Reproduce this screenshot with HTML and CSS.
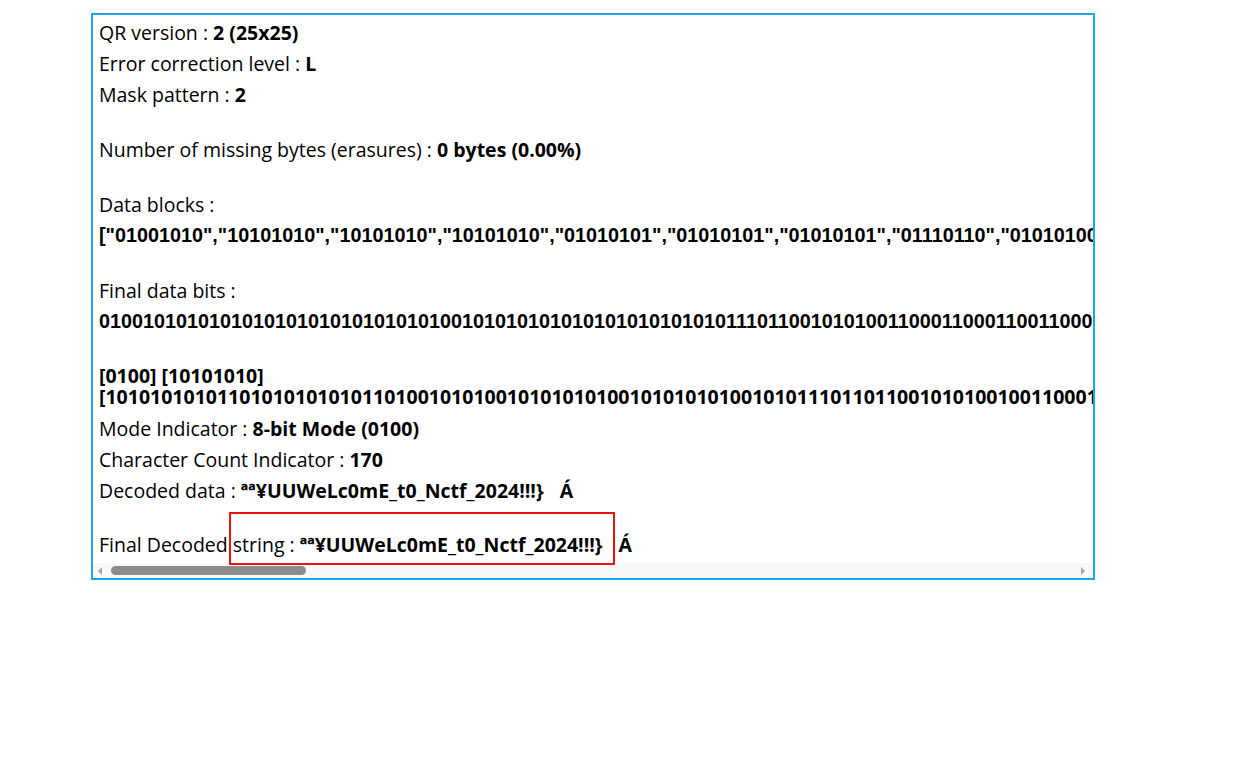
FILE: index.html
```html
<!DOCTYPE html>
<html>
<head>
<meta charset="utf-8">
<link rel="stylesheet" href="styles.css">
</head>
<body>
<div class="frame">
  <div class="scroller">
    <div class="content">
      <div class="row">QR version : <b>2 (25x25)</b></div>
      <div class="row">Error correction level : <b>L</b></div>
      <div class="row">Mask pattern : <b>2</b></div>
      <div class="gap"></div>
      <div class="row">Number of missing bytes (erasures) : <b>0 bytes (0.00%)</b></div>
      <div class="gap"></div>
      <div class="row">Data blocks :</div>
      <div class="row bits">["01001010","10101010","10101010","10101010","01010101","01010101","01010101","01110110","01010100","11000110","00110011","00011001","10011010","10100110","00110111","01100101","01110011","01011111","01110100","00110000","01011111","01001110","01100011","01110100","01100110","01011111","00110010","00110000","00110010","00110100","00100001","00100001","00100001","01111101"]</div>
      <div class="gap"></div>
      <div class="row">Final data bits :</div>
      <div class="row bits">0100101010101010101010101010101001010101010101010101010101110110010101001100011000110011000110011010101001100011011101100101011100110101111101110100001100000101111101001110011000110111010001100110010111110011001000110000001100100011010000100001001000010010000101111101</div>
      <div class="gap"></div>
      <div class="wrapblock"><b>[0100] [10101010] [10101010101101010101010110100101010010101010100101010101001010111011011001010100100110001101011010101001010101011101101100101010010011000110101010100101010111011011001010100100]</b></div>
      <div class="row">Mode Indicator : <b>8-bit Mode (0100)</b></div>
      <div class="row">Character Count Indicator : <b>170</b></div>
      <div class="row">Decoded data : <b>ªª¥UUWeLc0mE_t0_Nctf_2024!!!}<span class="blank"></span>Á</b></div>
      <div class="gap short"></div>
      <div class="row">Final Decoded string : <b>ªª¥UUWeLc0mE_t0_Nctf_2024!!!}<span class="blank"></span>Á</b></div>
    </div>
  </div>
  <div class="hscroll">
    <span class="arrow left"></span>
    <div class="track"><div class="thumb"></div></div>
    <span class="arrow right"></span>
  </div>
  <div class="highlight"></div>
</div>
</body>
</html>
```

FILE: styles.css
```css
html, body {
  margin: 0;
  padding: 0;
  background: #ffffff;
}

body {
  font-family: "Open Sans", "Noto Sans", sans-serif;
  color: #000;
}

.frame {
  position: relative;
  margin: 13px 0 0 91px;
  width: 1000px;
  height: 563px;
  border: 2px solid #1aa7ec;
  display: flex;
  flex-direction: column;
}

.scroller {
  flex: 1;
  overflow: hidden;
}

.content {
  padding: 2px 0 0 6px;
  font-size: 19.5px;
}

.row {
  white-space: nowrap;
  line-height: 31px;
  height: 31px;
}

.row b, .wrapblock b {
  font-weight: 700;
}

.gap {
  height: 24px;
}

.gap.short {
  height: 23px;
}

.bits {
  font-family: "Liberation Sans", Arial, sans-serif;
  font-weight: 700;
  font-size: 19.8px;
}

.wrapblock {
  width: 995px;
  line-height: 21px;
  padding: 4px 0 6px;
  white-space: normal;
}

.wrapblock b {
  font-size: 19.5px;
}

.blank {
  display: inline-block;
  width: 16px;
}

.hscroll {
  height: 15px;
  background: #f8f8f8;
  display: flex;
  align-items: center;
}

.arrow {
  width: 0;
  height: 0;
  border-top: 4px solid transparent;
  border-bottom: 4px solid transparent;
}

.arrow.left {
  margin: 0 5px 0 5px;
  border-right: 4px solid #a3a3a3;
}

.arrow.right {
  margin: 0 8px 0 5px;
  border-left: 4px solid #a3a3a3;
}

.track {
  flex: 1;
  height: 9px;
}

.thumb {
  width: 195px;
  height: 9px;
  margin-left: 4px;
  border-radius: 5px;
  background: #8c8c8c;
}

.highlight {
  position: absolute;
  left: 136px;
  top: 497px;
  width: 382px;
  height: 49px;
  border: 2px solid #f01010;
}
```
